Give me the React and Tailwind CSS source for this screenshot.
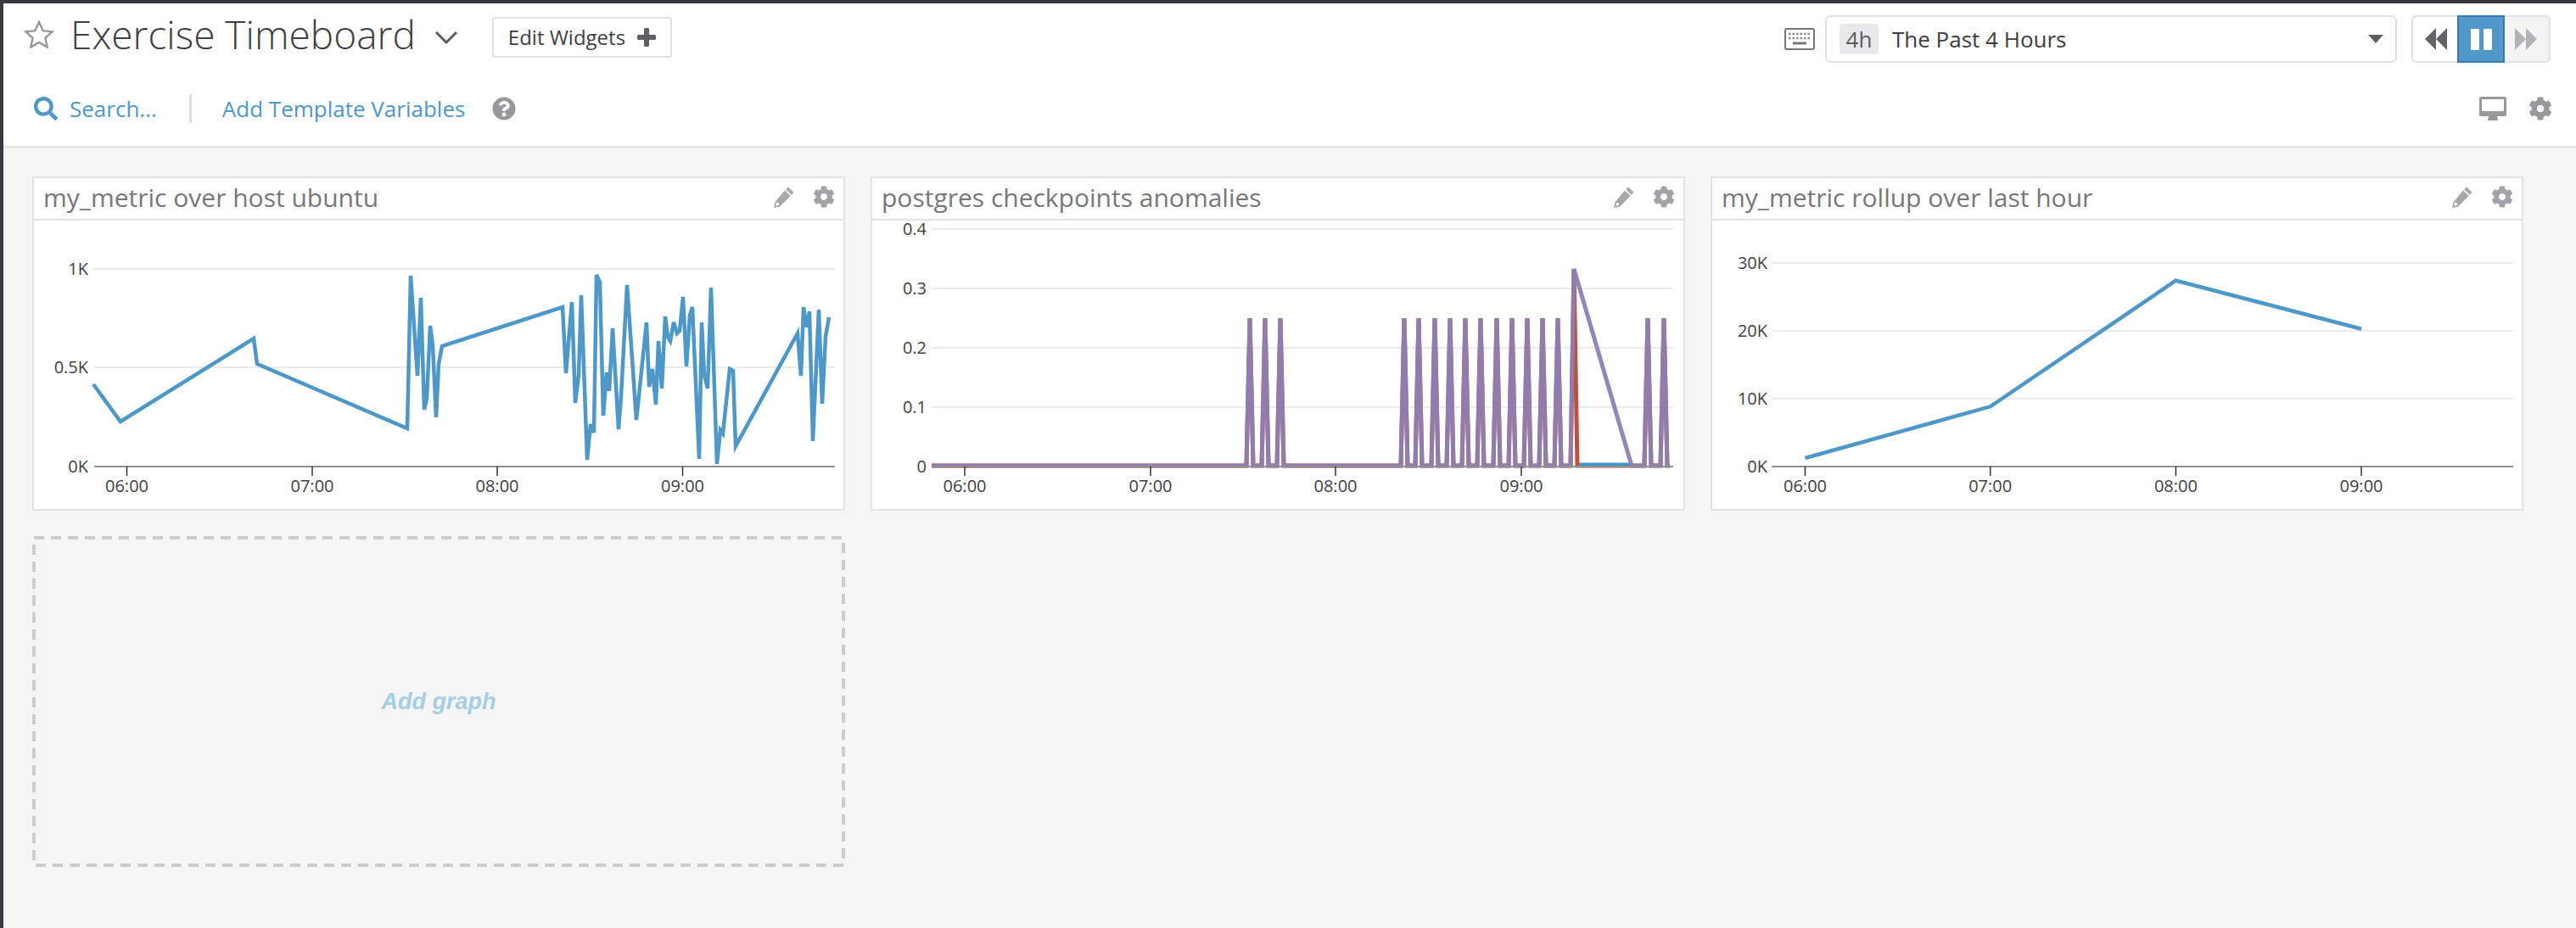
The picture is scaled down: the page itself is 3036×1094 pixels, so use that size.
import { FaCog, FaSearch, FaQuestionCircle } from "react-icons/fa";

const BLUE = "#4d97c9";

// chart points are read off the screenshot in page coordinates
const METRIC_LINE = [
  [110, 453], [142, 497], [299, 399], [303, 429], [480, 505], [484, 325], [492, 443], [496, 351],
  [500, 483], [503, 470], [507, 384], [510, 407], [514, 492], [517, 429], [521, 408], [663, 362],
  [667, 440], [674, 356], [678, 475], [682, 442], [685, 348], [692, 542], [696, 500], [700, 510],
  [703, 324], [707, 333], [711, 490], [715, 439], [718, 461], [722, 387], [729, 506], [732, 467],
  [739, 336], [750, 495], [762, 380], [765, 456], [769, 435], [773, 477], [776, 402], [780, 458],
  [784, 373], [787, 397], [790, 402], [794, 380], [798, 393], [801, 390], [805, 350], [809, 432],
  [813, 372], [816, 362], [824, 541], [827, 380], [830, 442], [834, 458], [838, 339], [845, 547],
  [849, 507], [852, 511], [860, 435], [864, 437], [867, 526], [940, 393], [944, 443], [947, 362],
  [951, 386], [954, 367], [958, 520], [965, 365], [969, 476], [973, 397], [977, 374],
];

const SPIKES = [1473, 1491, 1509, 1655, 1672, 1691, 1709, 1727, 1745, 1764, 1782, 1800, 1818, 1836];

function anomalyLine(tops, lastX) {
  const pts = [[1098, 549]];
  tops.forEach((x) => pts.push([x - 4, 549], [x, 375], [x + 4, 549]));
  pts.push([1851, 549], [1855, 317]);
  if (lastX === 1859) {
    pts.push([1859, 549], [1923, 549]);
  } else {
    pts.push([1923, 549]);
  }
  [1942, 1961].forEach((x) => pts.push([x - 4, 549], [x, 375], [x + 4, 549]));
  pts.push([1968, 549]);
  return pts;
}

const ROLLUP_LINE = [[2127.5, 540], [2345.7, 479.3], [2564.4, 330.7], [2783, 387.7]];

const toPoints = (pts) => pts.map((p) => p.join(",")).join(" ");

function Chart({ left, width, yTicks, xTicks, gridFrom, gridTo, labelX, children }) {
  const axisY = 550;
  return (
    <svg className="block w-full h-[340px] overflow-visible font-['Open_Sans',sans-serif]" viewBox={`${left} 260 ${width} 340`}>
      {yTicks.map((t) =>
        t.y === axisY ? null : (
          <line key={t.label} x1={gridFrom} x2={gridTo} y1={t.y} y2={t.y} stroke="#ebebed" strokeWidth="2" />
        )
      )}
      {children}
      <line x1={gridFrom} x2={gridTo} y1={axisY} y2={axisY} stroke="#8f8f92" strokeWidth="2" />
      {xTicks.map((x, i) => (
        <g key={x}>
          <line x1={x} x2={x} y1={axisY} y2={axisY + 11} stroke="#333" strokeWidth="1.5" />
          <text x={x} y={580} textAnchor="middle" fontSize="20" fill="#3e3e42">{`0${6 + i}:00`}</text>
        </g>
      ))}
      {yTicks.map((t) => (
        <text key={t.label} x={labelX} y={t.y + 7} textAnchor="end" fontSize="20" fill="#3e3e42">
          {t.label}
        </text>
      ))}
    </svg>
  );
}

function PencilIcon() {
  return (
    <svg viewBox="0 0 24 24" className="w-[25px] h-[25px]" fill="#a8a8ac">
      <path d="M18.2 1.2 22.8 5.8c.5.5.5 1.2 0 1.7L20.9 9.4 14.6 3.1 16.500 1.200c.5-.5 1.200-.5 1.700 0Z" />
      <path d="M13.500 4.200 19.800 10.500 7.600 22.700 1 24l1.300-6.600L13.500 4.200ZM3.900 18.300l-.8 2.600 .9.900 2.600-.8 .2-1.700-1.200-1.200-1.700.2Z" fillRule="evenodd" />
    </svg>
  );
}

function Widget({ title, children }) {
  return (
    <div className="bg-white border-2 border-[#e2e2e7]">
      <div className="h-[48px] flex items-center pl-[11px] pr-[10px]">
        <span className="text-[30px] leading-none text-[#77777a] mb-[2px]">{title}</span>
        <div className="ml-auto flex items-center gap-[22px] mb-[4px] text-[#a3a3a7]">
          <PencilIcon />
          <FaCog className="w-[26px] h-[26px]" />
        </div>
      </div>
      <div className="h-[2px] bg-[#e2e2e7]" />
      {children}
    </div>
  );
}

export default function App() {
  return (
    <div className="min-h-screen bg-[#f5f5f5] border-t-4 border-l-4 border-[#3a383f] font-['Open_Sans',sans-serif] text-[#3e3e42]">
      <header className="bg-white h-[170px] border-b-2 border-[#e0e0e6]">
        <div className="flex items-start pt-[14px] pr-[30px]">
          <div className="flex items-center h-[48px] mt-[2px] pl-[24px]">
            <svg viewBox="0 0 36 34" className="w-[36px] h-[34px] mb-[8px]" fill="none" stroke="#98989c" strokeWidth="2.400">
              <path d="M18 3l4.600 10.200 11 1.200-8.200 7.400 2.300 10.800L18 27l-9.700 5.600 2.300-10.800L2.400 14.400l11-1.200L18 3Z" />
            </svg>
            <h1 className="ml-[19px] text-[46px] leading-[56px] font-light mb-[8px] text-[#3e3e42]">Exercise Timeboard</h1>
            <svg viewBox="0 0 28 16" className="ml-[22px] w-[28px] h-[16px]" fill="none" stroke="#5c5c60" strokeWidth="3">
              <path d="M2 2l12 12L26 2" />
            </svg>
            <button className="ml-[40px] h-[48px] w-[212px] bg-white border-2 border-[#e0e0e6] rounded-[4px] flex items-center pl-[17px] text-[24px] text-[#3e3e42]">
              Edit Widgets
              <svg viewBox="0 0 22 22" className="ml-[14px] w-[22px] h-[22px]" fill="#5f5f63">
                <path d="M8 1.500q0-1.500 1.500-1.500h3q1.500 0 1.500 1.500V8h6.500q1.500 0 1.500 1.500v3q0 1.500-1.500 1.500H14v6.500q0 1.500-1.500 1.500h-3Q8 22 8 20.500V14H1.500Q0 14 0 12.500v-3Q0 8 1.500 8H8V1.500Z" />
              </svg>
            </button>
          </div>

          <div className="ml-auto flex items-center h-[56px]">
            <svg viewBox="0 0 36 26" className="w-[36px] h-[26px]" fill="none">
              <rect x="1" y="1" width="34" height="24" rx="2" stroke="#77777b" strokeWidth="2" />
              <path d="M5 7h26M5 12h26" stroke="#8a8a8e" strokeWidth="2.500" strokeDasharray="2.500 2" />
              <path d="M10 18h16" stroke="#77777b" strokeWidth="3" />
            </svg>
            <div className="ml-[12px] w-[674px] h-[56px] border-2 border-[#e0e0e6] rounded-[6px] flex items-center pl-[15px] pr-[14px]">
              <span className="w-[46px] h-[36px] rounded-[4px] bg-[#e9e9ec] flex items-center justify-center text-[26px] text-[#5c5c60]">4h</span>
              <span className="ml-[16px] text-[26px] text-[#3e3e42]">The Past 4 Hours</span>
              <span className="ml-auto w-0 h-0 border-x-[9px] border-x-transparent border-t-[10px] border-t-[#5f5f63]" />
            </div>
            <div className="ml-[17px] w-[164px] h-[56px] flex">
              <div className="w-[54px] border-2 border-r-0 border-[#e0e0e6] rounded-l-[6px] bg-white flex items-center justify-center pl-[2px]">
                <svg viewBox="0 0 26 26" className="w-[26px] h-[26px]" fill="#636367">
                  <path d="M13 0v26L0 13ZM26 0v26L13 13Z" />
                </svg>
              </div>
              <div className="w-[56px] border-2 border-[#3c7ba8] bg-[#4f98c9] flex items-center justify-center gap-[5px]">
                <span className="w-[10px] h-[25px] bg-white rounded-[1px]" />
                <span className="w-[10px] h-[25px] bg-white rounded-[1px]" />
              </div>
              <div className="w-[54px] border-2 border-l-0 border-[#e0e0e6] rounded-r-[6px] bg-[#f4f4f5] flex items-center justify-center pr-[2px]">
                <svg viewBox="0 0 26 26" className="w-[26px] h-[26px]" fill="#b3b2b6">
                  <path d="M0 0v26l13-13ZM13 0v26l13-13Z" />
                </svg>
              </div>
            </div>
          </div>
        </div>

        <div className="flex items-center h-[28px] mt-[40px] pl-[36px] pr-[28px]">
          <FaSearch className="w-[28px] h-[28px] text-[#4d97c9]" />
          <span className="ml-[14px] text-[26px] leading-[28px] text-[#4d97c9]">Search...</span>
          <span className="ml-[38px] w-[3px] h-[34px] bg-[#dcdce2]" />
          <span className="ml-[36px] text-[26px] leading-[28px] text-[#4d97c9]">Add Template Variables</span>
          <FaQuestionCircle className="ml-[32px] w-[28px] h-[28px] text-[#99979c]" />
          <div className="ml-auto flex items-center gap-[26px]">
            <svg viewBox="0 0 32 28" className="w-[32px] h-[28px]" fill="#98979b">
              <path fillRule="evenodd" d="M2 0h28q2 0 2 2v19q0 2-2 2H21l1 5H10l1-5H2q-2 0-2-2V2q0-2 2-2Zm1 3v14h26V3H3Z" />
            </svg>
            <FaCog className="w-[28px] h-[28px] text-[#98979b]" />
          </div>
        </div>
      </header>

      <main className="pt-[34px] pl-[34px]">
        <div className="grid grid-cols-[958px_960px_958px] gap-[30px]">
          <Widget title="my_metric over host ubuntu">
            <Chart
              left={40}
              width={954}
              gridFrom={111}
              gridTo={984}
              labelX={104}
              xTicks={[149.5, 368, 586, 804.500]}
              yTicks={[{ label: "1K", y: 317 }, { label: "0.5K", y: 433 }, { label: "0K", y: 550 }]}
            >
              <polyline points={toPoints(METRIC_LINE)} fill="none" stroke={BLUE} strokeWidth="4.500" />
            </Chart>
          </Widget>
          <Widget title="postgres checkpoints anomalies">
            <Chart
              left={1028}
              width={956}
              gridFrom={1098}
              gridTo={1972}
              labelX={1092}
              xTicks={[1137, 1356, 1574, 1793]}
              yTicks={[
                { label: "0.4", y: 270 },
                { label: "0.3", y: 340 },
                { label: "0.2", y: 410 },
                { label: "0.1", y: 480 },
                { label: "0", y: 550 },
              ]}
            >
              <polyline points={toPoints(anomalyLine(SPIKES, 1859))} fill="none" stroke="#c05038" strokeWidth="5" />
              <polyline points={toPoints([[1861, 548], [1921, 548]])} fill="none" stroke="#3f97c6" strokeWidth="5" />
              <polyline points={toPoints(anomalyLine(SPIKES, 0))} fill="none" stroke="#8d7fb4" strokeWidth="5" opacity="0.95" />
            </Chart>
          </Widget>
          <Widget title="my_metric rollup over last hour">
            <Chart
              left={2018}
              width={954}
              gridFrom={2088}
              gridTo={2962}
              labelX={2083}
              xTicks={[2127.500, 2345.700, 2564.400, 2783]}
              yTicks={[
                { label: "30K", y: 310 },
                { label: "20K", y: 390 },
                { label: "10K", y: 470 },
                { label: "0K", y: 550 },
              ]}
            >
              <polyline points={toPoints(ROLLUP_LINE)} fill="none" stroke={BLUE} strokeWidth="4.500" />
            </Chart>
          </Widget>
        </div>

        <div className="relative mt-[30px] w-[958px] h-[390px] flex items-center justify-center">
          <svg className="absolute inset-0 w-full h-full" fill="none">
            <rect x="2" y="2" width="954" height="386" stroke="#cccccc" strokeWidth="4" strokeDasharray="12 8" />
          </svg>
          <span className="font-['Liberation_Sans',sans-serif] font-bold italic text-[27px] text-[#a5cde6]">Add graph</span>
        </div>
      </main>
    </div>
  );
}
